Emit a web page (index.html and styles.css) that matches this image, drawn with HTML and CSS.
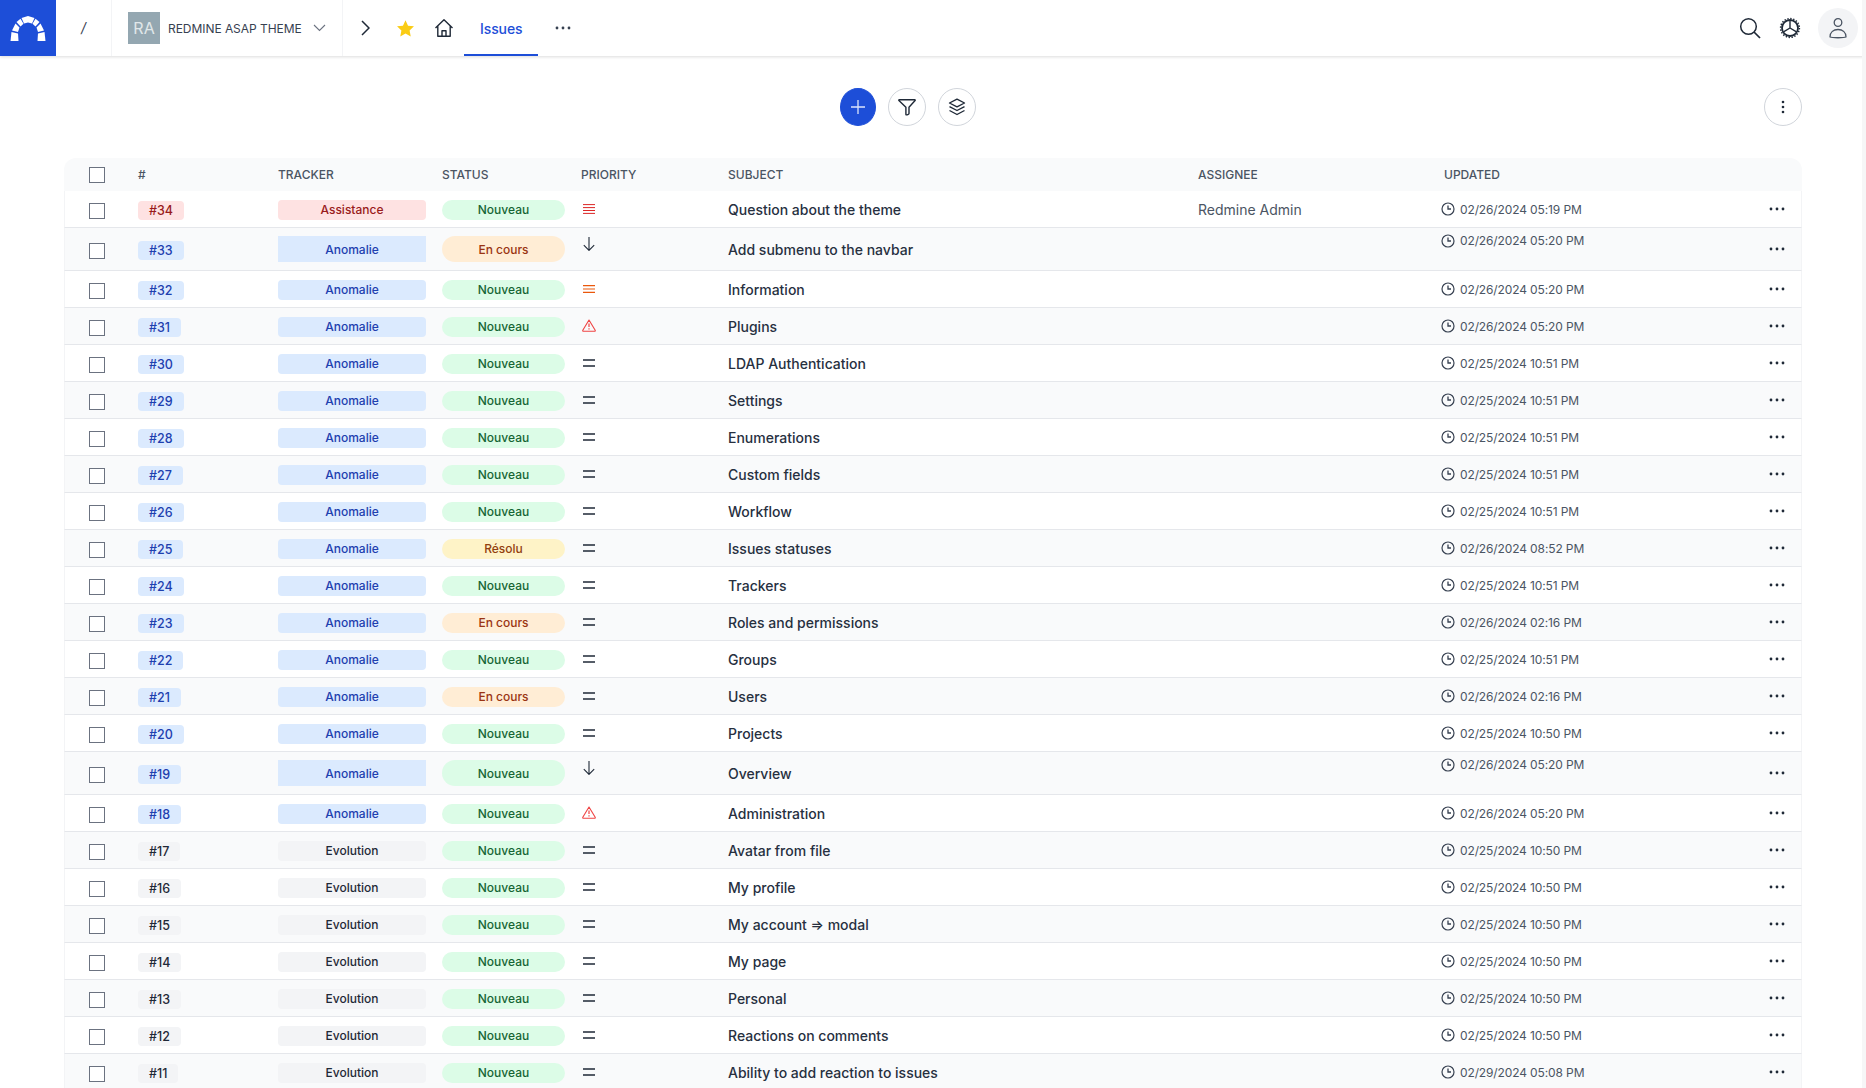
FILE: index.html
```html
<!DOCTYPE html>
<html lang="en">
<head>
<meta charset="utf-8">
<title>Issues - Redmine ASAP theme</title>
<link rel="stylesheet" href="styles.css">
</head>
<body>
<svg class="sprite" aria-hidden="true">
  <symbol id="i-dots" viewBox="0 0 16 4"><circle cx="2" cy="2" r="1.4"/><circle cx="8" cy="2" r="1.4"/><circle cx="14" cy="2" r="1.4"/></symbol>
  <symbol id="i-clock" viewBox="0 0 14 14"><circle cx="7" cy="7" r="6" fill="none" stroke="currentColor" stroke-width="1.2"/><path d="M7 3.4V7h3" fill="none" stroke="currentColor" stroke-width="1.3"/></symbol>
  <symbol id="i-eq" viewBox="0 0 12 8"><path d="M0 1h12M0 7h12" stroke="currentColor" stroke-width="1.3"/></symbol>
  <symbol id="i-urgent" viewBox="0 0 12 10"><path d="M0 .6h12M0 3.6h12M0 6.5h12M0 9.4h12" stroke="currentColor" stroke-width="1"/></symbol>
  <symbol id="i-high" viewBox="0 0 12 8"><path d="M0 .6h12M0 4h12M0 7.4h12" stroke="currentColor" stroke-width="1.2"/></symbol>
  <symbol id="i-down" viewBox="0 0 12 14"><path d="M6 0v13.4M.8 8.2 6 13.4l5.200-5.200" fill="none" stroke="currentColor" stroke-width="1.100"/></symbol>
  <symbol id="i-warn" viewBox="0 0 14 13"><path d="M7 1 13.200 11.300a.6.6 0 0 1-.5.9H1.300a.6.6 0 0 1-.5-.9Z" fill="none" stroke="currentColor" stroke-width="1.100" stroke-linejoin="round"/><path d="M7 4.500v3.500M7 9.300v1.100" stroke="currentColor" stroke-width="1.200"/></symbol>
</svg>

<header class="topbar">
  <a class="logo" href="#" aria-label="Redmine">
    <svg viewBox="0 0 56 56" width="56" height="56" fill="#fff">
      <path d="M10.500 41l1-9 6.500 1.500.5 7.500z"/><path d="M45.500 41l-1-9-6.500 1.500-.5 7.500z"/>
      <path d="M12 30.500l3.500-7 4 4-1.500 4.500z"/><path d="M44 30.500l-3.500-7-4 4 1.500 4.500z"/>
      <path d="M16.500 22l4-3.200 3 5-3 2.700z"/><path d="M39.500 22l-4-3.200-3 5 3 2.700z"/>
      <path d="M21.500 18l6.500-2 6.500 2-2.500 5.500-4-1-4 1z"/>
    </svg>
  </a>
  <div class="crumb">/</div>
  <div class="project">
    <span class="avatar">RA</span>
    <span class="project-name">REDMINE ASAP THEME</span>
    <svg class="chev-down" viewBox="0 0 13 8" width="13" height="8"><path d="M1 1l5.500 5.500L12 1" fill="none" stroke="currentColor" stroke-width="1.100"/></svg>
  </div>
  <nav class="nav">
    <svg class="nav-chev" viewBox="0 0 9 16" width="9" height="16"><path d="M1 1l7 7-7 7" fill="none" stroke="currentColor" stroke-width="1.500"/></svg>
    <svg class="nav-star" viewBox="0 0 24 24" width="19" height="19"><path d="M12 1.500l3.200 6.900 7.500.9-5.500 5.200 1.400 7.500L12 18.400l-6.600 3.600 1.400-7.500L1.300 9.300l7.500-.9z" fill="#facc15"/></svg>
    <svg class="nav-home" viewBox="0 0 20 20" width="20" height="20"><path d="M1.500 10 10 1.800 18.500 10M3.800 8v10.200h12.400V8M8 18.200v-5.400h4v5.400" fill="none" stroke="currentColor" stroke-width="1.400" stroke-linejoin="round"/></svg>
    <a class="tab" href="#">Issues</a>
    <svg class="nav-dots"><use href="#i-dots"/></svg>
  </nav>
  <div class="top-right">
    <svg class="top-search" viewBox="0 0 22 22" width="22" height="22"><circle cx="9.500" cy="9.500" r="7.800" fill="none" stroke="currentColor" stroke-width="1.500"/><path d="M15 15l6 6" stroke="currentColor" stroke-width="1.700"/></svg>
    <svg class="top-gear" viewBox="0 0 22 22" width="22" height="22"><circle cx="11" cy="11" r="8" fill="none" stroke="currentColor" stroke-width="1.800"/><circle cx="11" cy="11" r="9.400" fill="none" stroke="currentColor" stroke-width="1.500" stroke-dasharray="1.400 1.550"/><path d="M11 11V3.500M11 11l6.500 3.800M11 11l-6.500 3.800" stroke="currentColor" stroke-width="1.400"/></svg>
    <span class="user">
      <svg viewBox="0 0 20 22" width="20" height="22"><circle cx="10" cy="5.500" r="3.800" fill="none" stroke="currentColor" stroke-width="1.300"/><path d="M2 20c0-5 3.500-7.500 8-7.500s8 2.500 8 7.500c-2 1-14 1-16 0z" fill="none" stroke="currentColor" stroke-width="1.300" stroke-linejoin="round"/></svg>
    </span>
  </div>
</header>

<main class="content">
  <div class="toolbar">
    <div class="tools">
      <button class="round primary" type="button"><svg viewBox="0 0 16 16" width="16" height="16"><path d="M8 1v14M1 8h14" stroke="currentColor" stroke-width="1.300"/></svg></button>
      <button class="round" type="button"><svg viewBox="0 0 18 18" width="18" height="18"><path d="M1.200 1.800h15.600c.4 0 .5.400.3.700L11 9.300v6.200c0 .8-2.300 1.700-2.900 1.300-.2-.1-.2-.3-.2-.5V9.300L.9 2.500c-.2-.3-.1-.7.300-.7z" fill="none" stroke="currentColor" stroke-width="1.400" stroke-linejoin="round"/></svg></button>
      <button class="round" type="button"><svg viewBox="0 0 18 18" width="18" height="18"><path d="M9 1.200 16.500 5 9 8.800 1.500 5zM1.500 8.700 9 12.500l7.500-3.800M1.500 12.500 9 16.500l7.500-4" fill="none" stroke="currentColor" stroke-width="1.400" stroke-linejoin="round"/></svg></button>
    </div>
    <button class="round" type="button"><svg viewBox="0 0 4 14" width="4" height="14" fill="currentColor"><circle cx="2" cy="2" r="1.300"/><circle cx="2" cy="7" r="1.300"/><circle cx="2" cy="12" r="1.300"/></svg></button>
  </div>

  <table class="issues">
    <colgroup>
      <col class="c-check"><col class="c-id"><col class="c-tracker"><col class="c-status"><col class="c-priority"><col class="c-subject"><col class="c-assignee"><col class="c-updated"><col class="c-actions">
    </colgroup>
    <thead>
      <tr><th><span class="box"></span></th><th>#</th><th>Tracker</th><th>Status</th><th>Priority</th><th>Subject</th><th>Assignee</th><th class="th-updated">Updated</th><th></th></tr>
    </thead>
    <tbody>
      <tr><td><span class="box"></span></td><td><span class="id t-red">#34</span></td><td><span class="tag t-red">Assistance</span></td><td><span class="pill p-green">Nouveau</span></td><td class="prio"><svg class="ic-urgent"><use href="#i-urgent"/></svg></td><td class="subject">Question about the theme</td><td class="assignee">Redmine Admin</td><td class="date"><svg class="clock"><use href="#i-clock"/></svg>02/26/2024 05:19 PM</td><td class="act"><svg class="dots"><use href="#i-dots"/></svg></td></tr>
      <tr class="tall"><td><span class="box"></span></td><td><span class="id t-blue">#33</span></td><td><span class="tag t-blue">Anomalie</span></td><td><span class="pill p-orange">En cours</span></td><td class="prio"><svg class="ic-down"><use href="#i-down"/></svg></td><td class="subject">Add submenu to the navbar</td><td class="assignee"></td><td class="date"><svg class="clock"><use href="#i-clock"/></svg>02/26/2024 05:20 PM</td><td class="act"><svg class="dots"><use href="#i-dots"/></svg></td></tr>
      <tr><td><span class="box"></span></td><td><span class="id t-blue">#32</span></td><td><span class="tag t-blue">Anomalie</span></td><td><span class="pill p-green">Nouveau</span></td><td class="prio"><svg class="ic-high"><use href="#i-high"/></svg></td><td class="subject">Information</td><td class="assignee"></td><td class="date"><svg class="clock"><use href="#i-clock"/></svg>02/26/2024 05:20 PM</td><td class="act"><svg class="dots"><use href="#i-dots"/></svg></td></tr>
      <tr><td><span class="box"></span></td><td><span class="id t-blue">#31</span></td><td><span class="tag t-blue">Anomalie</span></td><td><span class="pill p-green">Nouveau</span></td><td class="prio"><svg class="ic-warn"><use href="#i-warn"/></svg></td><td class="subject">Plugins</td><td class="assignee"></td><td class="date"><svg class="clock"><use href="#i-clock"/></svg>02/26/2024 05:20 PM</td><td class="act"><svg class="dots"><use href="#i-dots"/></svg></td></tr>
      <tr><td><span class="box"></span></td><td><span class="id t-blue">#30</span></td><td><span class="tag t-blue">Anomalie</span></td><td><span class="pill p-green">Nouveau</span></td><td class="prio"><svg class="ic-eq"><use href="#i-eq"/></svg></td><td class="subject">LDAP Authentication</td><td class="assignee"></td><td class="date"><svg class="clock"><use href="#i-clock"/></svg>02/25/2024 10:51 PM</td><td class="act"><svg class="dots"><use href="#i-dots"/></svg></td></tr>
      <tr><td><span class="box"></span></td><td><span class="id t-blue">#29</span></td><td><span class="tag t-blue">Anomalie</span></td><td><span class="pill p-green">Nouveau</span></td><td class="prio"><svg class="ic-eq"><use href="#i-eq"/></svg></td><td class="subject">Settings</td><td class="assignee"></td><td class="date"><svg class="clock"><use href="#i-clock"/></svg>02/25/2024 10:51 PM</td><td class="act"><svg class="dots"><use href="#i-dots"/></svg></td></tr>
      <tr><td><span class="box"></span></td><td><span class="id t-blue">#28</span></td><td><span class="tag t-blue">Anomalie</span></td><td><span class="pill p-green">Nouveau</span></td><td class="prio"><svg class="ic-eq"><use href="#i-eq"/></svg></td><td class="subject">Enumerations</td><td class="assignee"></td><td class="date"><svg class="clock"><use href="#i-clock"/></svg>02/25/2024 10:51 PM</td><td class="act"><svg class="dots"><use href="#i-dots"/></svg></td></tr>
      <tr><td><span class="box"></span></td><td><span class="id t-blue">#27</span></td><td><span class="tag t-blue">Anomalie</span></td><td><span class="pill p-green">Nouveau</span></td><td class="prio"><svg class="ic-eq"><use href="#i-eq"/></svg></td><td class="subject">Custom fields</td><td class="assignee"></td><td class="date"><svg class="clock"><use href="#i-clock"/></svg>02/25/2024 10:51 PM</td><td class="act"><svg class="dots"><use href="#i-dots"/></svg></td></tr>
      <tr><td><span class="box"></span></td><td><span class="id t-blue">#26</span></td><td><span class="tag t-blue">Anomalie</span></td><td><span class="pill p-green">Nouveau</span></td><td class="prio"><svg class="ic-eq"><use href="#i-eq"/></svg></td><td class="subject">Workflow</td><td class="assignee"></td><td class="date"><svg class="clock"><use href="#i-clock"/></svg>02/25/2024 10:51 PM</td><td class="act"><svg class="dots"><use href="#i-dots"/></svg></td></tr>
      <tr><td><span class="box"></span></td><td><span class="id t-blue">#25</span></td><td><span class="tag t-blue">Anomalie</span></td><td><span class="pill p-yellow">Résolu</span></td><td class="prio"><svg class="ic-eq"><use href="#i-eq"/></svg></td><td class="subject">Issues statuses</td><td class="assignee"></td><td class="date"><svg class="clock"><use href="#i-clock"/></svg>02/26/2024 08:52 PM</td><td class="act"><svg class="dots"><use href="#i-dots"/></svg></td></tr>
      <tr><td><span class="box"></span></td><td><span class="id t-blue">#24</span></td><td><span class="tag t-blue">Anomalie</span></td><td><span class="pill p-green">Nouveau</span></td><td class="prio"><svg class="ic-eq"><use href="#i-eq"/></svg></td><td class="subject">Trackers</td><td class="assignee"></td><td class="date"><svg class="clock"><use href="#i-clock"/></svg>02/25/2024 10:51 PM</td><td class="act"><svg class="dots"><use href="#i-dots"/></svg></td></tr>
      <tr><td><span class="box"></span></td><td><span class="id t-blue">#23</span></td><td><span class="tag t-blue">Anomalie</span></td><td><span class="pill p-orange">En cours</span></td><td class="prio"><svg class="ic-eq"><use href="#i-eq"/></svg></td><td class="subject">Roles and permissions</td><td class="assignee"></td><td class="date"><svg class="clock"><use href="#i-clock"/></svg>02/26/2024 02:16 PM</td><td class="act"><svg class="dots"><use href="#i-dots"/></svg></td></tr>
      <tr><td><span class="box"></span></td><td><span class="id t-blue">#22</span></td><td><span class="tag t-blue">Anomalie</span></td><td><span class="pill p-green">Nouveau</span></td><td class="prio"><svg class="ic-eq"><use href="#i-eq"/></svg></td><td class="subject">Groups</td><td class="assignee"></td><td class="date"><svg class="clock"><use href="#i-clock"/></svg>02/25/2024 10:51 PM</td><td class="act"><svg class="dots"><use href="#i-dots"/></svg></td></tr>
      <tr><td><span class="box"></span></td><td><span class="id t-blue">#21</span></td><td><span class="tag t-blue">Anomalie</span></td><td><span class="pill p-orange">En cours</span></td><td class="prio"><svg class="ic-eq"><use href="#i-eq"/></svg></td><td class="subject">Users</td><td class="assignee"></td><td class="date"><svg class="clock"><use href="#i-clock"/></svg>02/26/2024 02:16 PM</td><td class="act"><svg class="dots"><use href="#i-dots"/></svg></td></tr>
      <tr><td><span class="box"></span></td><td><span class="id t-blue">#20</span></td><td><span class="tag t-blue">Anomalie</span></td><td><span class="pill p-green">Nouveau</span></td><td class="prio"><svg class="ic-eq"><use href="#i-eq"/></svg></td><td class="subject">Projects</td><td class="assignee"></td><td class="date"><svg class="clock"><use href="#i-clock"/></svg>02/25/2024 10:50 PM</td><td class="act"><svg class="dots"><use href="#i-dots"/></svg></td></tr>
      <tr class="tall"><td><span class="box"></span></td><td><span class="id t-blue">#19</span></td><td><span class="tag t-blue">Anomalie</span></td><td><span class="pill p-green">Nouveau</span></td><td class="prio"><svg class="ic-down"><use href="#i-down"/></svg></td><td class="subject">Overview</td><td class="assignee"></td><td class="date"><svg class="clock"><use href="#i-clock"/></svg>02/26/2024 05:20 PM</td><td class="act"><svg class="dots"><use href="#i-dots"/></svg></td></tr>
      <tr><td><span class="box"></span></td><td><span class="id t-blue">#18</span></td><td><span class="tag t-blue">Anomalie</span></td><td><span class="pill p-green">Nouveau</span></td><td class="prio"><svg class="ic-warn"><use href="#i-warn"/></svg></td><td class="subject">Administration</td><td class="assignee"></td><td class="date"><svg class="clock"><use href="#i-clock"/></svg>02/26/2024 05:20 PM</td><td class="act"><svg class="dots"><use href="#i-dots"/></svg></td></tr>
      <tr><td><span class="box"></span></td><td><span class="id t-gray">#17</span></td><td><span class="tag t-gray">Evolution</span></td><td><span class="pill p-green">Nouveau</span></td><td class="prio"><svg class="ic-eq"><use href="#i-eq"/></svg></td><td class="subject">Avatar from file</td><td class="assignee"></td><td class="date"><svg class="clock"><use href="#i-clock"/></svg>02/25/2024 10:50 PM</td><td class="act"><svg class="dots"><use href="#i-dots"/></svg></td></tr>
      <tr><td><span class="box"></span></td><td><span class="id t-gray">#16</span></td><td><span class="tag t-gray">Evolution</span></td><td><span class="pill p-green">Nouveau</span></td><td class="prio"><svg class="ic-eq"><use href="#i-eq"/></svg></td><td class="subject">My profile</td><td class="assignee"></td><td class="date"><svg class="clock"><use href="#i-clock"/></svg>02/25/2024 10:50 PM</td><td class="act"><svg class="dots"><use href="#i-dots"/></svg></td></tr>
      <tr><td><span class="box"></span></td><td><span class="id t-gray">#15</span></td><td><span class="tag t-gray">Evolution</span></td><td><span class="pill p-green">Nouveau</span></td><td class="prio"><svg class="ic-eq"><use href="#i-eq"/></svg></td><td class="subject">My account ⇒ modal</td><td class="assignee"></td><td class="date"><svg class="clock"><use href="#i-clock"/></svg>02/25/2024 10:50 PM</td><td class="act"><svg class="dots"><use href="#i-dots"/></svg></td></tr>
      <tr><td><span class="box"></span></td><td><span class="id t-gray">#14</span></td><td><span class="tag t-gray">Evolution</span></td><td><span class="pill p-green">Nouveau</span></td><td class="prio"><svg class="ic-eq"><use href="#i-eq"/></svg></td><td class="subject">My page</td><td class="assignee"></td><td class="date"><svg class="clock"><use href="#i-clock"/></svg>02/25/2024 10:50 PM</td><td class="act"><svg class="dots"><use href="#i-dots"/></svg></td></tr>
      <tr><td><span class="box"></span></td><td><span class="id t-gray">#13</span></td><td><span class="tag t-gray">Evolution</span></td><td><span class="pill p-green">Nouveau</span></td><td class="prio"><svg class="ic-eq"><use href="#i-eq"/></svg></td><td class="subject">Personal</td><td class="assignee"></td><td class="date"><svg class="clock"><use href="#i-clock"/></svg>02/25/2024 10:50 PM</td><td class="act"><svg class="dots"><use href="#i-dots"/></svg></td></tr>
      <tr><td><span class="box"></span></td><td><span class="id t-gray">#12</span></td><td><span class="tag t-gray">Evolution</span></td><td><span class="pill p-green">Nouveau</span></td><td class="prio"><svg class="ic-eq"><use href="#i-eq"/></svg></td><td class="subject">Reactions on comments</td><td class="assignee"></td><td class="date"><svg class="clock"><use href="#i-clock"/></svg>02/25/2024 10:50 PM</td><td class="act"><svg class="dots"><use href="#i-dots"/></svg></td></tr>
      <tr><td><span class="box"></span></td><td><span class="id t-gray">#11</span></td><td><span class="tag t-gray">Evolution</span></td><td><span class="pill p-green">Nouveau</span></td><td class="prio"><svg class="ic-eq"><use href="#i-eq"/></svg></td><td class="subject">Ability to add reaction to issues</td><td class="assignee"></td><td class="date"><svg class="clock"><use href="#i-clock"/></svg>02/29/2024 05:08 PM</td><td class="act"><svg class="dots"><use href="#i-dots"/></svg></td></tr>
    </tbody>
  </table>
</main>
<div class="scroll-edge"></div>
</body>
</html>
```

FILE: styles.css
```css
* { box-sizing: border-box; }
html, body { margin: 0; height: 1088px; overflow: hidden; background: #fff; }
body { font-family: Inter, "Liberation Sans", sans-serif; color: #1f2937; font-size: 14px; }
.sprite { display: none; }
svg { display: block; }
.scroll-edge { position: fixed; top: 0; right: 0; bottom: 0; width: 4px; background: #f6f6f7; }

/* top bar */
.topbar { display: flex; align-items: center; height: 56px; background: #fff; box-shadow: 0 1px 3px rgba(0,0,0,.14); position: relative; }
.logo { display: block; width: 56px; height: 56px; background: #1d4ed8; flex: none; }
.crumb { width: 56px; height: 56px; line-height: 56px; text-align: center; color: #374151; border-right: 1px solid #f3f4f6; font-size: 14px; font-style: italic; }
.project { display: flex; align-items: center; height: 56px; width: 231px; padding-left: 16px; border-right: 1px solid #f3f4f6; }
.avatar { display: flex; align-items: center; justify-content: center; width: 32px; height: 32px; background: #94a7b1; color: #e1e7ea; font-size: 16px; }
.project-name { margin-left: 8px; font-size: 12px; letter-spacing: -.05px; color: #374151; white-space: nowrap; }
.chev-down { margin-left: 11px; color: #6b7280; }
.nav { display: flex; align-items: center; height: 56px; color: #1f2937; }
.nav-chev { margin-left: 18px; }
.nav-star { margin-left: 26px; }
.nav-home { margin-left: 19px; }
.tab { display: flex; align-items: center; height: 56px; margin-left: 10px; padding: 2px 16px 0; color: #1d4ed8; font-size: 14px; font-weight: 500; letter-spacing: -.1px; text-decoration: none; border-bottom: 2px solid #1d4ed8; }
.nav-dots { width: 16px; height: 4px; margin-left: 17px; fill: #374151; }
.top-right { display: flex; align-items: center; margin-left: auto; padding-right: 8px; color: #1f2937; }
.top-search { margin-right: 18px; }
.top-gear { margin-right: 17px; }
.user { display: flex; align-items: center; justify-content: center; width: 40px; height: 40px; border-radius: 50%; background: #f3f4f6; color: #4b5563; }

/* toolbar */
.content { padding: 32px 64px 0; }
.toolbar { display: flex; align-items: center; justify-content: space-between; padding-bottom: 32px; }
.tools { display: flex; gap: 12px; margin-left: 776px; }
.round { display: flex; align-items: center; justify-content: center; width: 38px; height: 38px; padding: 0; border: 1px solid #d1d5db; border-radius: 50%; background: #fff; color: #1f2937; }
.round.primary { width: 36px; background: #1d4ed8; border-color: #1d4ed8; color: #dbe4fb; }

/* table */
.issues { width: 1738px; table-layout: fixed; border-collapse: separate; border-spacing: 0; }
.c-check { width: 74px; }
.c-id { width: 140px; }
.c-tracker { width: 164px; }
.c-status { width: 139px; }
.c-priority { width: 147px; }
.c-subject { width: 470px; }
.c-assignee { width: 243px; }
.c-updated { width: 328px; }
.c-actions { width: 33px; }
.issues th { height: 33px; padding: 0; background: #f9fafb; text-align: left; font-size: 12px; font-weight: 500; color: #4b5563; text-transform: uppercase; }
.issues th:first-child { border-top-left-radius: 12px; padding-left: 25px; }
.issues th:last-child { border-top-right-radius: 12px; }
.issues th.th-updated { padding-left: 3px; }
.issues td { height: 37px; padding: 0; border-bottom: 1px solid #e5e7eb; vertical-align: middle; }
.issues td:first-child { padding-left: 24px; border-left: 1px solid #f3f4f6; }
.issues td:last-child { border-right: 1px solid #f3f4f6; }
.issues tbody tr:nth-child(even) td { background: #f9fafb; }
.issues tr.tall td { height: 43px; }
.box { display: block; width: 16px; height: 16px; border: 1.500px solid #6b7280; background: #fff; }
.issues td .box { margin-top: 4px; }

.id { display: inline-block; height: 19px; line-height: 19px; margin-top: 2px; padding: 0 11px; border-radius: 4px; font-size: 12.500px; font-weight: 500; vertical-align: middle; }
.tag { display: block; width: 148px; height: 20px; line-height: 20px; margin-top: 2px; border-radius: 4px; text-align: center; font-size: 12px; font-weight: 500; }
.pill { display: block; width: 123px; height: 20px; line-height: 20px; margin-top: 2px; border-radius: 10px; text-align: center; font-size: 12px; font-weight: 500; }
.tall .tag, .tall .pill { height: 26px; line-height: 27px; margin-top: 0; }
.tall .tag { border-radius: 0; }
.tall .pill { border-radius: 13px; }
.t-red { background: #fee2e2; color: #991b1b; }
.t-blue { background: #dbeafe; color: #1e40af; }
.t-gray { background: #f3f4f6; color: #1f2937; }
.p-green { background: #dcfce7; color: #166534; }
.p-orange { background: #ffedd5; color: #9a3412; }
.p-yellow { background: #fef3c7; color: #92400e; }

.prio svg { margin-left: 2px; }
.ic-eq { width: 12px; height: 8px; color: #1f2937; }
.ic-urgent { width: 12px; height: 10px; color: #dc2626; }
.ic-high { width: 12px; height: 8px; color: #ea580c; }
.prio .ic-warn { width: 14px; height: 13px; color: #ef4444; margin-left: 1px; margin-top: -2px; }
.ic-down { width: 12px; height: 14px; color: #1f2937; }
.tall .prio { vertical-align: top; padding-top: 9px; }

.subject { font-size: 14px; font-weight: 450; color: #27303f; white-space: nowrap; }
.assignee { color: #4b5563; font-size: 14px; }
.date { font-size: 12px; letter-spacing: -.12px; color: #4b5563; white-space: nowrap; }
.clock { display: inline-block; width: 14px; height: 14px; margin-right: 5px; vertical-align: -2.500px; color: #374151; }
.tall .date { vertical-align: top; padding-top: 5px; }
.dots { width: 16px; height: 4px; fill: #1f2937; }
```
